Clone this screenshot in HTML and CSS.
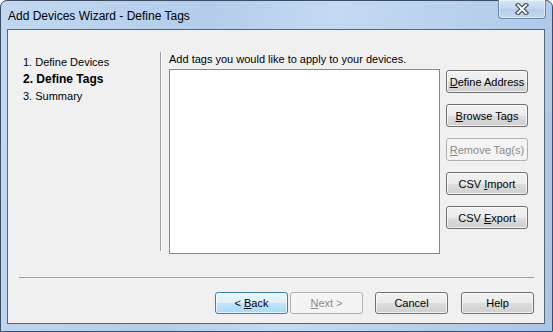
FILE: index.html
```html
<!DOCTYPE html>
<html lang="en">

<head>
    <meta charset="UTF-8">
    <title>Add Devices Wizard - Define Tags</title>
    <link rel="stylesheet" href="styles.css">
</head>

<body>
    <div class="window">
        <div class="titlebar">
            <div class="title">Add Devices Wizard - Define Tags</div>
            <button class="close-btn">
                <svg width="18" height="12" viewBox="0 0 18 12">
                    <path d="M5 2 L13 10 M13 2 L5 10" stroke="#3f4a57" stroke-width="4.4" stroke-linecap="square" fill="none"/>
                    <path d="M5 2 L13 10 M13 2 L5 10" stroke="#f4f7fb" stroke-width="2.2" stroke-linecap="square" fill="none"/>
                </svg>
            </button>
        </div>
        <div class="client">
            <div class="main">
                <div class="steps">
                    <div class="step">1. Define Devices</div>
                    <div class="step current">2. Define Tags</div>
                    <div class="step">3. Summary</div>
                </div>
                <div class="divider"></div>
                <div class="content">
                    <div class="hint">Add tags you would like to apply to your devices.</div>
                    <div class="tag-area">
                        <div class="tag-list"></div>
                        <div class="side-buttons">
                            <button class="btn side"><u>D</u>efine Address</button>
                            <button class="btn side"><u>B</u>rowse Tags</button>
                            <button class="btn side" disabled><u>R</u>emove Tag(s)</button>
                            <button class="btn side">CSV <u>I</u>mport</button>
                            <button class="btn side">CSV <u>E</u>xport</button>
                        </div>
                    </div>
                </div>
            </div>
            <div class="footer">
                <div class="footer-line"></div>
                <div class="footer-buttons">
                    <button class="btn nav default">&lt; <u>B</u>ack</button>
                    <button class="btn nav" disabled><u>N</u>ext &gt;</button>
                    <button class="btn nav cancel">Cancel</button>
                    <button class="btn nav help">Help</button>
                </div>
            </div>
        </div>
    </div>
</body>

</html>
```

FILE: styles.css
```css
body,
html {
    margin: 0;
    padding: 0;
    font-family: 'Liberation Sans', Arial, sans-serif;
    font-size: 11px;
    background-color: #ffffff;
}

.window {
    width: 553px;
    height: 332px;
    box-sizing: border-box;
    border: 1px solid #3b4c63;
    border-radius: 7px 7px 0 0;
    background: linear-gradient(100deg, #c2d8f0 0%, #b3cdeb 35%, #c4daf1 55%, #a9c6e7 100%);
    padding: 0 7px 7px 6px;
    display: flex;
    flex-direction: column;
}

.titlebar {
    height: 28px;
    display: flex;
    justify-content: space-between;
    align-items: flex-start;
}

.title {
    font-size: 12px;
    color: #000;
    margin-top: 8px;
    margin-left: 1px;
}

.close-btn {
    width: 48px;
    height: 19px;
    margin-top: -1px;
    margin-right: -1px;
    padding: 0;
    border: 1px solid #6f87a6;
    border-top: none;
    border-radius: 0 0 4px 4px;
    background: linear-gradient(#d9e7f6, #c0d5ee 50%, #b3cbe8 51%, #c6daf0);
    box-shadow: inset 0 0 0 1px rgba(255, 255, 255, 0.45);
    display: flex;
    align-items: center;
    justify-content: center;
}

.client {
    flex-grow: 1;
    border: 1px solid #55657a;
    background-color: #f0f0f0;
    display: flex;
    flex-direction: column;
}

.main {
    display: flex;
    padding: 22px 0 0 15px;
}

.steps {
    width: 137px;
    padding-top: 2px;
}

.step {
    line-height: 17px;
    height: 17px;
    color: #000;
}

.step.current {
    font-weight: bold;
    font-size: 12px;
}

.divider {
    width: 0;
    height: 199px;
    border-left: 1px solid #a0a0a0;
    border-right: 1px solid #ffffff;
}

.content {
    margin-left: 7px;
    display: flex;
    flex-direction: column;
}

.hint {
    line-height: 15px;
    margin-bottom: 2px;
}

.tag-area {
    display: flex;
}

.tag-list {
    width: 269px;
    height: 183px;
    border: 1px solid #828790;
    background-color: #ffffff;
}

.side-buttons {
    margin-left: 6px;
    margin-top: 1px;
    display: flex;
    flex-direction: column;
    gap: 11px;
}

.btn {
    font-family: 'Liberation Sans', Arial, sans-serif;
    font-size: 11px;
    color: #000;
    padding: 0;
    border: 1px solid #707070;
    border-radius: 3px;
    background: linear-gradient(#f2f2f2 0%, #ebebeb 50%, #dddddd 51%, #cfcfcf 100%);
    box-shadow: inset 0 0 0 1px rgba(255, 255, 255, 0.7);
}

.btn:disabled {
    color: #8a8a8a;
    border-color: #adb2b5;
    background: #f4f4f4;
    box-shadow: none;
}

.btn.side {
    width: 82px;
    height: 23px;
}

.footer {
    padding: 23px 0 0 11px;
}

.footer-line {
    width: 515px;
    border-top: 1px solid #a0a0a0;
}

.footer-buttons {
    display: flex;
    padding-left: 196px;
    margin-top: 14px;
}

.btn.nav {
    width: 73px;
    height: 22px;
}

.btn.nav.default {
    border-color: #3c7fb1;
    background: linear-gradient(#eaf6fd 0%, #d9f0fc 50%, #bee6fd 51%, #a7d9f5 100%);
    margin-right: 2px;
}

.btn.nav.cancel {
    margin-left: 12px;
}

.btn.nav.help {
    margin-left: 13px;
}
```
